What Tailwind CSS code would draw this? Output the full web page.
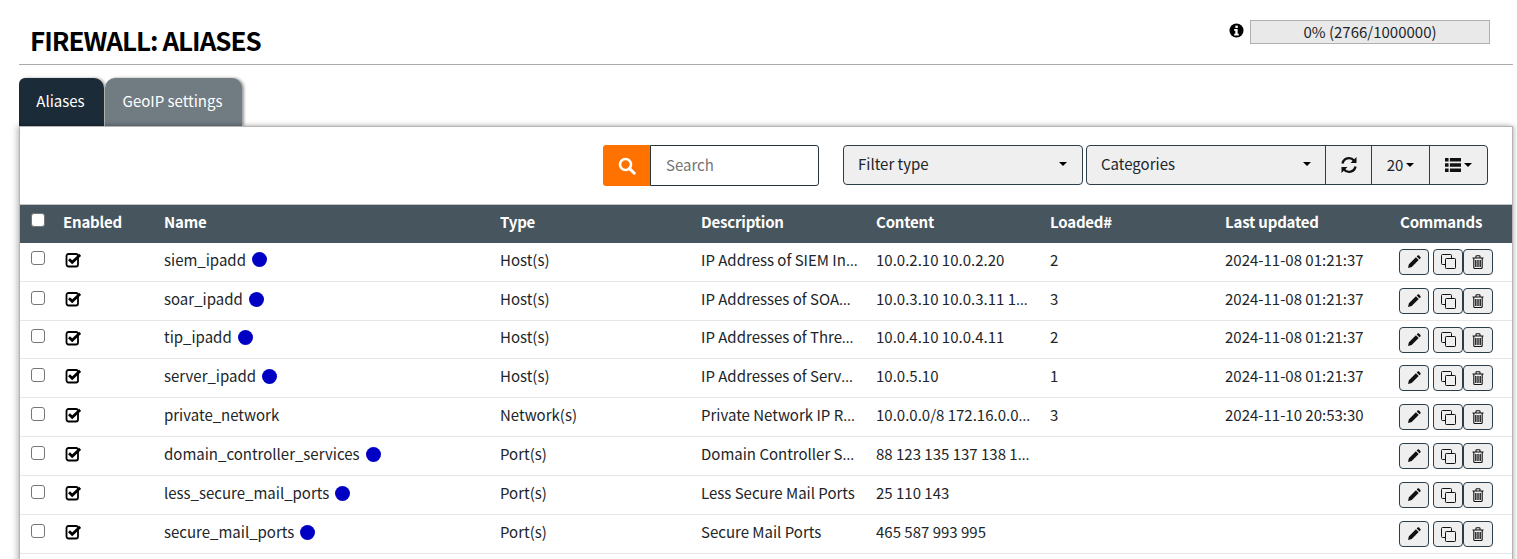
<!DOCTYPE html>
<html lang="en">
<head>
  <meta charset="UTF-8">
  <meta name="viewport" content="width=device-width, initial-scale=1.0">
  <title>Firewall: Aliases</title>
  <script src="https://cdn.jsdelivr.net/npm/@tailwindcss/browser@4"></script>
</head>
<body class="bg-white overflow-hidden h-[559px] text-[15px] text-[#212529] font-['Noto_Sans_CJK_SC','Liberation_Sans',sans-serif]">
  <!-- icon symbols -->
  <svg class="hidden">
    <symbol id="i-check" viewBox="0 0 16 16">
      <path d="M3.500 2h7.500a2 2 0 0 1 2 2V12.500a2 2 0 0 1-2 2H3.500a2 2 0 0 1-2-2V4a2 2 0 0 1 2-2z" fill="none" stroke="#000" stroke-width="1.800"/>
      <path d="M4 7.200l3.200 3.100L15.200 2.900" fill="none" stroke="#000" stroke-width="2.800"/>
    </symbol>
    <symbol id="i-pencil" viewBox="0 0 14 14">
      <path d="M1 13l.9-3.700 7-7 2.800 2.800-7 7zM9.700 1.500l.9-.9c.4-.4 1-.4 1.400 0l1.400 1.400c.4.4.4 1 0 1.400l-.9.9z" fill="#111"/>
    </symbol>
    <symbol id="i-copy" viewBox="0 0 15 15">
      <path d="M10.500 4.500V1.500a1 1 0 0 0-1-1h-8a1 1 0 0 0-1 1v8a1 1 0 0 0 1 1h3" fill="none" stroke="#111" stroke-width="1"/>
      <rect x="4.500" y="4.500" width="10" height="10" rx=".8" fill="none" stroke="#111" stroke-width="1"/>
    </symbol>
    <symbol id="i-trash" viewBox="0 0 12 14">
      <path d="M.5 3h11M4 3V1.500c0-.4.300-.7.700-.7h2.600c.4 0 .7.300.7.700V3M1.800 3v9.500c0 .6.400 1 1 1h6.400c.6 0 1-.4 1-1V3" fill="none" stroke="#111" stroke-width="1.100"/>
      <path d="M3.800 5v7M6 5v7M8.200 5v7" stroke="#111" stroke-width="1.300"/>
    </symbol>
  </svg>

  <div class="flex flex-col pl-[19px] pr-[4px]">
    <header class="flex justify-between h-[65px] border-b border-[#aaa]">
      <h1 class="pl-[11px] pt-[22px] text-[26px] leading-[36px] font-semibold tracking-[-1px] text-black">FIREWALL: ALIASES</h1>
      <div class="flex items-start gap-[6px] pt-[20px] pr-[23px]">
        <svg class="w-[15px] h-[15px] mt-[3px]" viewBox="0 0 16 16"><circle cx="8" cy="8" r="7.500" fill="#000"/><rect x="6.800" y="2.800" width="2.600" height="2.500" fill="#fff"/><path d="M5.500 6.500h3.700v5h1.200v1.800h-4.900v-1.800h1.200V8.300H5.500z" fill="#fff"/></svg>
        <div class="w-[240px] h-[24px] bg-[#e9e9e9] border border-[#b0b0b0] text-center text-[15px] leading-[22px]">0% (2766/1000000)</div>
      </div>
    </header>

    <nav class="flex gap-px mt-[13px] h-[48px] text-white">
      <a class="w-[85px] pb-[2px] pr-[2px] flex items-center justify-center bg-[#1b2b38] rounded-tr-[10px] rounded-tl-[6px] shadow-[2px_0_3px_rgba(0,0,0,0.35)]">Aliases</a>
      <a class="w-[137px] pb-[2px] pr-[2px] flex items-center justify-center bg-[#717b82] rounded-t-[10px] shadow-[2px_0_3px_rgba(0,0,0,0.4)]">GeoIP settings</a>
    </nav>

    <section class="h-[440px] border border-[#b5b5b5] border-b-0 shadow-[-2px_0_6px_rgba(0,0,0,0.25),2px_0_4px_rgba(0,0,0,0.15)] bg-white">
      <div class="flex items-start justify-end h-[77px] pt-[18px] pr-[24px]">
        <div class="flex h-[41px] mr-[24px]">
          <span class="w-[47px] flex items-center justify-center bg-[#ff7200] rounded-l-[3px]">
            <svg class="w-[18px] h-[18px]" viewBox="0 0 18 18"><circle cx="7.500" cy="7.500" r="5.500" fill="none" stroke="#fff" stroke-width="2.600"/><path d="M11.600 11.600l4.600 4.600" stroke="#fff" stroke-width="3" stroke-linecap="round"/></svg>
          </span>
          <input placeholder="Search" class="w-[169px] pl-[15px] bg-white border border-[#24343f] rounded-r-[3px] placeholder:text-[#757575] outline-none">
        </div>
        <button class="w-[240px] h-[40px] pb-[2px] flex items-center justify-between pl-[14px] pr-[15px] bg-[#efefef] border border-[#2b3e4a] rounded-[4px]">
          <span>Filter type</span><span class="border-x-[4px] border-x-transparent border-t-[4px] border-t-black"></span>
        </button>
        <button class="w-[240px] h-[40px] pb-[2px] ml-[3px] flex items-center justify-between pl-[14px] pr-[14px] bg-[#efefef] border border-[#2b3e4a] rounded-l-[4px]">
          <span>Categories</span><span class="border-x-[4px] border-x-transparent border-t-[4px] border-t-black"></span>
        </button>
        <button class="w-[47px] h-[40px] -ml-px flex items-center justify-center bg-[#efefef] border border-[#2b3e4a]">
          <svg class="w-[18px] h-[18px]" viewBox="0 0 18 18"><path d="M2.500 7.500A6.600 6.600 0 0 1 14 4.500M15.500 10.500A6.600 6.600 0 0 1 4 13.500" fill="none" stroke="#111" stroke-width="2.400"/><path d="M16.500 1v6h-6zM1.500 17v-6h6z" fill="#111"/></svg>
        </button>
        <button class="w-[59px] h-[40px] -ml-px flex items-center justify-center gap-[3px] bg-[#efefef] border border-[#2b3e4a]">
          <span>20</span><span class="border-x-[4px] border-x-transparent border-t-[4px] border-t-black"></span>
        </button>
        <button class="w-[59px] h-[40px] -ml-px flex items-center justify-center gap-[3px] bg-[#efefef] border border-[#2b3e4a] rounded-r-[4px]">
          <svg class="w-[16px] h-[14px]" viewBox="0 0 18 14" preserveAspectRatio="none"><path d="M0 0h4v3.500H0zM5.500 0H18v3.500H5.500zM0 5.200h4v3.500H0zM5.500 5.200H18v3.500H5.500zM0 10.500h4V14H0zM5.500 10.500H18V14H5.500z" fill="#111"/></svg>
          <span class="border-x-[4px] border-x-transparent border-t-[4px] border-t-black"></span>
        </button>
      </div>

      <table class="w-full table-fixed border-collapse">
        <colgroup>
          <col class="w-[43px]"><col class="w-[101px]"><col class="w-[336px]"><col class="w-[201px]"><col class="w-[175px]"><col class="w-[174px]"><col class="w-[175px]"><col class="w-[175px]"><col>
        </colgroup>
        <thead class="bg-[#46555e] text-white text-left tracking-[-0.2px]">
          <tr class="h-[38px] border-t border-[#c4c4c4] [&>th]:pb-[3px]">
            <th class="pl-[11px]"><input type="checkbox" class="block appearance-none w-[14px] h-[14px] bg-white border border-[#767676] rounded-[3px] -mt-[5px]"></th>
            <th class="font-semibold">Enabled</th>
            <th class="font-semibold">Name</th>
            <th class="font-semibold">Type</th>
            <th class="font-semibold">Description</th>
            <th class="font-semibold">Content</th>
            <th class="font-semibold">Loaded#</th>
            <th class="font-semibold">Last updated</th>
            <th class="font-semibold">Commands</th>
          </tr>
        </thead>
        <tbody>
          <tr class="h-[39px] border-b border-[#e6e6e6] [&>td:not(:last-child)]:pb-[4px]">
            <td class="pl-[11px]"><input type="checkbox" class="block appearance-none w-[14px] h-[14px] bg-white border border-[#767676] rounded-[3px] -mt-[3px]"></td>
            <td class="pl-[2px]"><svg class="block w-[16px] h-[16px]"><use href="#i-check"/></svg></td>
            <td><span class="flex items-center gap-[6px]">siem_ipadd <i class="w-[15px] h-[15px] rounded-full bg-[#0000c4]"></i></span></td>
            <td>Host(s)</td>
            <td class="truncate pr-[17px] font-['Open_Sans']"><span class="font-['Noto_Sans_CJK_SC']">IP Address of SIEM Instances</span></td>
            <td class="truncate pr-[17px] font-['Open_Sans']"><span class="font-['Noto_Sans_CJK_SC']">10.0.2.10 10.0.2.20</span></td>
            <td>2</td>
            <td>2024-11-08 01:21:37</td>
            <td><div class="flex -ml-px"><button class="w-[30px] h-[26px] mr-[4px] flex items-center justify-center bg-[#efefef] border border-[#2b3e4a] rounded-[4px]"><svg class="w-[14px] h-[14px]"><use href="#i-pencil"/></svg></button><button class="w-[30px] h-[26px] flex items-center justify-center bg-[#efefef] border border-[#2b3e4a] rounded-[4px]"><svg class="w-[15px] h-[15px]"><use href="#i-copy"/></svg></button><button class="w-[30px] h-[26px] flex items-center justify-center bg-[#efefef] border border-[#2b3e4a] rounded-[4px]"><svg class="w-[12px] h-[14px]"><use href="#i-trash"/></svg></button></div></td>
          </tr>
          <tr class="h-[39px] border-b border-[#e6e6e6] [&>td:not(:last-child)]:pb-[4px]">
            <td class="pl-[11px]"><input type="checkbox" class="block appearance-none w-[14px] h-[14px] bg-white border border-[#767676] rounded-[3px] -mt-[3px]"></td>
            <td class="pl-[2px]"><svg class="block w-[16px] h-[16px]"><use href="#i-check"/></svg></td>
            <td><span class="flex items-center gap-[6px]">soar_ipadd <i class="w-[15px] h-[15px] rounded-full bg-[#0000c4]"></i></span></td>
            <td>Host(s)</td>
            <td class="truncate pr-[17px] font-['Open_Sans']"><span class="font-['Noto_Sans_CJK_SC']">IP Addresses of SOAR Instances</span></td>
            <td class="truncate pr-[17px] font-['Open_Sans']"><span class="font-['Noto_Sans_CJK_SC']">10.0.3.10 10.0.3.11 10.0.3.12</span></td>
            <td>3</td>
            <td>2024-11-08 01:21:37</td>
            <td><div class="flex -ml-px"><button class="w-[30px] h-[26px] mr-[4px] flex items-center justify-center bg-[#efefef] border border-[#2b3e4a] rounded-[4px]"><svg class="w-[14px] h-[14px]"><use href="#i-pencil"/></svg></button><button class="w-[30px] h-[26px] flex items-center justify-center bg-[#efefef] border border-[#2b3e4a] rounded-[4px]"><svg class="w-[15px] h-[15px]"><use href="#i-copy"/></svg></button><button class="w-[30px] h-[26px] flex items-center justify-center bg-[#efefef] border border-[#2b3e4a] rounded-[4px]"><svg class="w-[12px] h-[14px]"><use href="#i-trash"/></svg></button></div></td>
          </tr>
          <tr class="h-[38px] border-b border-[#e6e6e6] [&>td:not(:last-child)]:pb-[4px]">
            <td class="pl-[11px]"><input type="checkbox" class="block appearance-none w-[14px] h-[14px] bg-white border border-[#767676] rounded-[3px] -mt-[3px]"></td>
            <td class="pl-[2px]"><svg class="block w-[16px] h-[16px]"><use href="#i-check"/></svg></td>
            <td><span class="flex items-center gap-[6px]">tip_ipadd <i class="w-[15px] h-[15px] rounded-full bg-[#0000c4]"></i></span></td>
            <td>Host(s)</td>
            <td class="truncate pr-[17px] font-['Open_Sans']"><span class="font-['Noto_Sans_CJK_SC']">IP Addresses of Threat Intel</span></td>
            <td class="truncate pr-[17px] font-['Open_Sans']"><span class="font-['Noto_Sans_CJK_SC']">10.0.4.10 10.0.4.11</span></td>
            <td>2</td>
            <td>2024-11-08 01:21:37</td>
            <td><div class="flex -ml-px"><button class="w-[30px] h-[26px] mr-[4px] flex items-center justify-center bg-[#efefef] border border-[#2b3e4a] rounded-[4px]"><svg class="w-[14px] h-[14px]"><use href="#i-pencil"/></svg></button><button class="w-[30px] h-[26px] flex items-center justify-center bg-[#efefef] border border-[#2b3e4a] rounded-[4px]"><svg class="w-[15px] h-[15px]"><use href="#i-copy"/></svg></button><button class="w-[30px] h-[26px] flex items-center justify-center bg-[#efefef] border border-[#2b3e4a] rounded-[4px]"><svg class="w-[12px] h-[14px]"><use href="#i-trash"/></svg></button></div></td>
          </tr>
          <tr class="h-[39px] border-b border-[#e6e6e6] [&>td:not(:last-child)]:pb-[4px]">
            <td class="pl-[11px]"><input type="checkbox" class="block appearance-none w-[14px] h-[14px] bg-white border border-[#767676] rounded-[3px] -mt-[3px]"></td>
            <td class="pl-[2px]"><svg class="block w-[16px] h-[16px]"><use href="#i-check"/></svg></td>
            <td><span class="flex items-center gap-[6px]">server_ipadd <i class="w-[15px] h-[15px] rounded-full bg-[#0000c4]"></i></span></td>
            <td>Host(s)</td>
            <td class="truncate pr-[17px] font-['Open_Sans']"><span class="font-['Noto_Sans_CJK_SC']">IP Addresses of Servers</span></td>
            <td class="truncate pr-[17px] font-['Open_Sans']"><span class="font-['Noto_Sans_CJK_SC']">10.0.5.10</span></td>
            <td>1</td>
            <td>2024-11-08 01:21:37</td>
            <td><div class="flex -ml-px"><button class="w-[30px] h-[26px] mr-[4px] flex items-center justify-center bg-[#efefef] border border-[#2b3e4a] rounded-[4px]"><svg class="w-[14px] h-[14px]"><use href="#i-pencil"/></svg></button><button class="w-[30px] h-[26px] flex items-center justify-center bg-[#efefef] border border-[#2b3e4a] rounded-[4px]"><svg class="w-[15px] h-[15px]"><use href="#i-copy"/></svg></button><button class="w-[30px] h-[26px] flex items-center justify-center bg-[#efefef] border border-[#2b3e4a] rounded-[4px]"><svg class="w-[12px] h-[14px]"><use href="#i-trash"/></svg></button></div></td>
          </tr>
          <tr class="h-[39px] border-b border-[#e6e6e6] [&>td:not(:last-child)]:pb-[4px]">
            <td class="pl-[11px]"><input type="checkbox" class="block appearance-none w-[14px] h-[14px] bg-white border border-[#767676] rounded-[3px] -mt-[3px]"></td>
            <td class="pl-[2px]"><svg class="block w-[16px] h-[16px]"><use href="#i-check"/></svg></td>
            <td>private_network</td>
            <td>Network(s)</td>
            <td class="truncate pr-[17px] font-['Open_Sans']"><span class="font-['Noto_Sans_CJK_SC']">Private Network IP Ranges</span></td>
            <td class="truncate pr-[17px] font-['Open_Sans']"><span class="font-['Noto_Sans_CJK_SC']">10.0.0.0/8 172.16.0.0/12 192.168.0.0/16</span></td>
            <td>3</td>
            <td>2024-11-10 20:53:30</td>
            <td><div class="flex -ml-px"><button class="w-[30px] h-[26px] mr-[4px] flex items-center justify-center bg-[#efefef] border border-[#2b3e4a] rounded-[4px]"><svg class="w-[14px] h-[14px]"><use href="#i-pencil"/></svg></button><button class="w-[30px] h-[26px] flex items-center justify-center bg-[#efefef] border border-[#2b3e4a] rounded-[4px]"><svg class="w-[15px] h-[15px]"><use href="#i-copy"/></svg></button><button class="w-[30px] h-[26px] flex items-center justify-center bg-[#efefef] border border-[#2b3e4a] rounded-[4px]"><svg class="w-[12px] h-[14px]"><use href="#i-trash"/></svg></button></div></td>
          </tr>
          <tr class="h-[39px] border-b border-[#e6e6e6] [&>td:not(:last-child)]:pb-[4px]">
            <td class="pl-[11px]"><input type="checkbox" class="block appearance-none w-[14px] h-[14px] bg-white border border-[#767676] rounded-[3px] -mt-[3px]"></td>
            <td class="pl-[2px]"><svg class="block w-[16px] h-[16px]"><use href="#i-check"/></svg></td>
            <td><span class="flex items-center gap-[6px]">domain_controller_services <i class="w-[15px] h-[15px] rounded-full bg-[#0000c4]"></i></span></td>
            <td>Port(s)</td>
            <td class="truncate pr-[17px] font-['Open_Sans']"><span class="font-['Noto_Sans_CJK_SC']">Domain Controller Services</span></td>
            <td class="truncate pr-[17px] font-['Open_Sans']"><span class="font-['Noto_Sans_CJK_SC']">88 123 135 137 138 139 389 445 464</span></td>
            <td></td>
            <td></td>
            <td><div class="flex -ml-px"><button class="w-[30px] h-[26px] mr-[4px] flex items-center justify-center bg-[#efefef] border border-[#2b3e4a] rounded-[4px]"><svg class="w-[14px] h-[14px]"><use href="#i-pencil"/></svg></button><button class="w-[30px] h-[26px] flex items-center justify-center bg-[#efefef] border border-[#2b3e4a] rounded-[4px]"><svg class="w-[15px] h-[15px]"><use href="#i-copy"/></svg></button><button class="w-[30px] h-[26px] flex items-center justify-center bg-[#efefef] border border-[#2b3e4a] rounded-[4px]"><svg class="w-[12px] h-[14px]"><use href="#i-trash"/></svg></button></div></td>
          </tr>
          <tr class="h-[39px] border-b border-[#e6e6e6] [&>td:not(:last-child)]:pb-[4px]">
            <td class="pl-[11px]"><input type="checkbox" class="block appearance-none w-[14px] h-[14px] bg-white border border-[#767676] rounded-[3px] -mt-[3px]"></td>
            <td class="pl-[2px]"><svg class="block w-[16px] h-[16px]"><use href="#i-check"/></svg></td>
            <td><span class="flex items-center gap-[6px]">less_secure_mail_ports <i class="w-[15px] h-[15px] rounded-full bg-[#0000c4]"></i></span></td>
            <td>Port(s)</td>
            <td class="truncate pr-[17px] font-['Open_Sans']"><span class="font-['Noto_Sans_CJK_SC']">Less Secure Mail Ports</span></td>
            <td class="truncate pr-[17px] font-['Open_Sans']"><span class="font-['Noto_Sans_CJK_SC']">25 110 143</span></td>
            <td></td>
            <td></td>
            <td><div class="flex -ml-px"><button class="w-[30px] h-[26px] mr-[4px] flex items-center justify-center bg-[#efefef] border border-[#2b3e4a] rounded-[4px]"><svg class="w-[14px] h-[14px]"><use href="#i-pencil"/></svg></button><button class="w-[30px] h-[26px] flex items-center justify-center bg-[#efefef] border border-[#2b3e4a] rounded-[4px]"><svg class="w-[15px] h-[15px]"><use href="#i-copy"/></svg></button><button class="w-[30px] h-[26px] flex items-center justify-center bg-[#efefef] border border-[#2b3e4a] rounded-[4px]"><svg class="w-[12px] h-[14px]"><use href="#i-trash"/></svg></button></div></td>
          </tr>
          <tr class="h-[39px] border-b border-[#e6e6e6] [&>td:not(:last-child)]:pb-[4px]">
            <td class="pl-[11px]"><input type="checkbox" class="block appearance-none w-[14px] h-[14px] bg-white border border-[#767676] rounded-[3px] -mt-[3px]"></td>
            <td class="pl-[2px]"><svg class="block w-[16px] h-[16px]"><use href="#i-check"/></svg></td>
            <td><span class="flex items-center gap-[6px]">secure_mail_ports <i class="w-[15px] h-[15px] rounded-full bg-[#0000c4]"></i></span></td>
            <td>Port(s)</td>
            <td class="truncate pr-[17px] font-['Open_Sans']"><span class="font-['Noto_Sans_CJK_SC']">Secure Mail Ports</span></td>
            <td class="truncate pr-[17px] font-['Open_Sans']"><span class="font-['Noto_Sans_CJK_SC']">465 587 993 995</span></td>
            <td></td>
            <td></td>
            <td><div class="flex -ml-px"><button class="w-[30px] h-[26px] mr-[4px] flex items-center justify-center bg-[#efefef] border border-[#2b3e4a] rounded-[4px]"><svg class="w-[14px] h-[14px]"><use href="#i-pencil"/></svg></button><button class="w-[30px] h-[26px] flex items-center justify-center bg-[#efefef] border border-[#2b3e4a] rounded-[4px]"><svg class="w-[15px] h-[15px]"><use href="#i-copy"/></svg></button><button class="w-[30px] h-[26px] flex items-center justify-center bg-[#efefef] border border-[#2b3e4a] rounded-[4px]"><svg class="w-[12px] h-[14px]"><use href="#i-trash"/></svg></button></div></td>
          </tr>
        </tbody>
      </table>
    </section>
  </div>
</body>
</html>
